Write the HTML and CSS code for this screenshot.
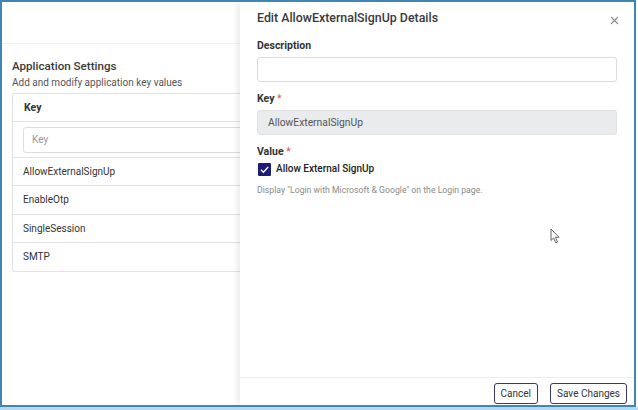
FILE: index.html
```html
<!DOCTYPE html>
<html>
<head>
<meta charset="utf-8">
<link rel="stylesheet" href="styles.css">
</head>
<body>
<div class="frame">
  <div class="page">
    <div class="topbar"></div>
    <div class="content">
      <h1 class="title">Application Settings</h1>
      <p class="subtitle">Add and modify application key values</p>
      <div class="table">
        <div class="thead">Key</div>
        <div class="filter"><div class="filter-input">Key</div></div>
        <div class="row">AllowExternalSignUp</div>
        <div class="row">EnableOtp</div>
        <div class="row">SingleSession</div>
        <div class="row last">SMTP</div>
      </div>
    </div>
  </div>
  <div class="panel">
    <div class="panel-body">
      <div class="panel-head">
        <span class="panel-title">Edit AllowExternalSignUp Details</span>
        <svg class="close" width="9" height="9" viewBox="0 0 9 9"><path d="M1 1L8 8M8 1L1 8" stroke="#8a8a8a" stroke-width="1.1"/></svg>
      </div>
      <div class="field">
        <div class="label">Description</div>
        <div class="input"></div>
      </div>
      <div class="field">
        <div class="label">Key <span class="req">*</span></div>
        <div class="input disabled">AllowExternalSignUp</div>
      </div>
      <div class="field">
        <div class="label">Value <span class="req">*</span></div>
        <div class="check-row">
          <span class="checkbox"><svg width="13" height="13" viewBox="0 0 13 13"><path d="M3 6.8L5.4 9.2L10.2 4" fill="none" stroke="#fff" stroke-width="1.3"/></svg></span>
          <span class="check-label">Allow External SignUp</span>
        </div>
        <div class="help">Display "Login with Microsoft &amp; Google" on the Login page.</div>
      </div>
    </div>
    <div class="panel-foot">
      <button class="btn">Cancel</button>
      <button class="btn">Save Changes</button>
    </div>
    <svg class="cursor" width="12" height="16" viewBox="0 0 12 16"><path d="M1 1L1 12.5L3.6 10L5.8 14.8L7.5 14L5.4 9.3L9 9.3Z" fill="#fff" stroke="#555" stroke-width="0.9" stroke-linejoin="round"/></svg>
  </div>
</div>
<div class="strip"></div>
</body>
</html>
```

FILE: styles.css
```css
* { box-sizing: border-box; }
html, body { margin: 0; padding: 0; background: #fff; }
body {
  width: 638px;
  height: 410px;
  overflow: hidden;
  font-family: Roboto, "Liberation Sans", sans-serif;
  color: #333;
}
.frame {
  position: relative;
  width: 636px;
  height: 407px;
  border: 2px solid #3f86b6;
  overflow: hidden;
  background: #fff;
  display: flex;
  flex-direction: column;
}
.strip {
  height: 3px;
  width: 638px;
  background: #b1daf1;
}
.page {
  flex: 1;
  display: flex;
  flex-direction: column;
}
.topbar {
  height: 42px;
  border-bottom: 1px solid #f0f0f0;
  flex: none;
}
.content {
  padding: 14px 0 0 10px;
}
.title {
  margin: 0;
  font-size: 11.6px;
  font-weight: 500;
  color: #3a3a3a;
  line-height: 16px;
}
.subtitle {
  margin: 2px 0 0;
  font-size: 10px;
  color: #555;
  line-height: 14px;
}
.table {
  margin-top: 3px;
  width: 600px;
  border: 1px solid #e2e2e2;
  border-radius: 2px;
}
.thead {
  height: 28px;
  line-height: 27px;
  padding-left: 11px;
  font-size: 10.5px;
  font-weight: 700;
  color: #333;
  border-bottom: 1px solid #e2e2e2;
}
.filter {
  height: 36px;
  padding: 5px 0 0 10px;
  border-bottom: 1px solid #e2e2e2;
}
.filter-input {
  height: 26px;
  border: 1px solid #ddd;
  border-radius: 3px;
  font-size: 10px;
  color: #999;
  line-height: 24px;
  padding-left: 8px;
}
.row {
  height: 28.3px;
  line-height: 28px;
  padding-left: 10px;
  font-size: 10px;
  color: #333;
  border-bottom: 1px solid #e2e2e2;
}
.row.last { border-bottom: none; }

.panel {
  position: absolute;
  top: 0;
  left: 238px;
  right: 0;
  bottom: 0;
  background: #fff;
  box-shadow: -3px 0 6px rgba(0,0,0,0.08);
  display: flex;
  flex-direction: column;
}
.panel-body {
  flex: 1;
  padding: 8px 17px 0 17px;
}
.panel-head {
  display: flex;
  justify-content: space-between;
  align-items: flex-start;
  height: 29px;
}
.panel-title {
  font-size: 12.4px;
  font-weight: 500;
  color: #3a3a3a;
  line-height: 16px;
}
.close { margin-top: 6px; margin-right: -2px; }
.field { margin-bottom: 10px; }
.label {
  font-size: 10.5px;
  font-weight: 700;
  color: #333;
  line-height: 14px;
  margin-bottom: 4px;
}
.req { color: #d9534f; font-weight: 400; }
.input {
  height: 25px;
  border: 1px solid #dcdcdc;
  border-radius: 3px;
  font-size: 10.3px;
  color: #555;
  line-height: 23px;
  padding-left: 10px;
}
.input.disabled { background: #e9ebed; border-color: #e0e2e4; }
.check-row {
  display: flex;
  align-items: center;
  gap: 5px;
  margin-top: -1px;
  padding-left: 1px;
}
.checkbox {
  width: 13px;
  height: 13px;
  background: #1f1c76;
  border-radius: 1px;
  display: flex;
}
.check-label {
  font-size: 10px;
  font-weight: 500;
  color: #222;
  line-height: 14px;
}
.help {
  margin-top: 9px;
  font-size: 8.7px;
  color: #8a8a8a;
  line-height: 11px;
}
.panel-foot {
  height: 28px;
  flex: none;
  border-top: 1px solid #eeeeee;
  display: flex;
  justify-content: flex-end;
  align-items: flex-start;
  gap: 12px;
  padding-right: 7px;
  padding-top: 5px;
}
.btn {
  height: 21px;
  padding: 0 6px;
  border: 1px solid #3a3769;
  border-radius: 3px;
  background: #fff;
  font-family: Roboto, "Liberation Sans", sans-serif;
  font-size: 10px;
  color: #333;
}
.cursor {
  position: absolute;
  left: 310px;
  top: 226px;
}
```
